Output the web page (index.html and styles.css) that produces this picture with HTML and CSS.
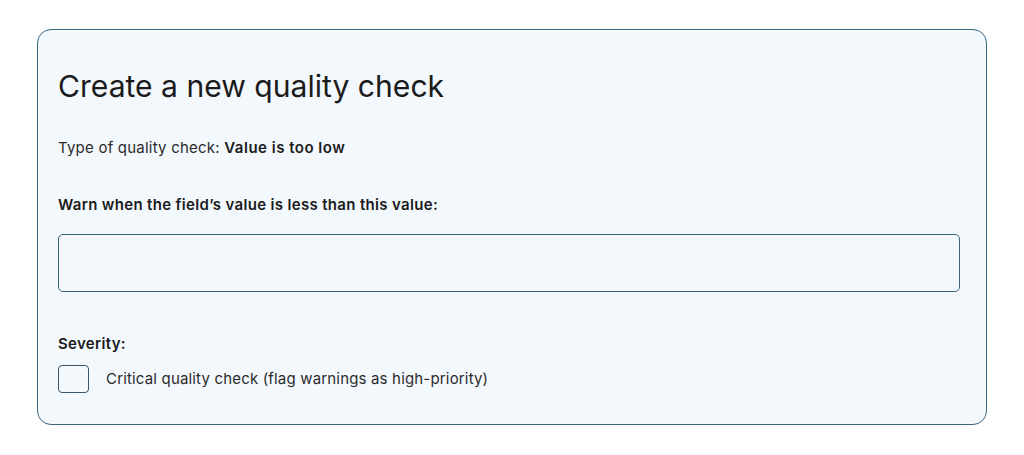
FILE: index.html
```html
<!DOCTYPE html>
<html lang="en">
<head>
<meta charset="utf-8">
<title>Create a new quality check</title>
<link rel="stylesheet" href="styles.css">
</head>
<body>
  <div class="card">
    <h1 class="title">Create a new quality check</h1>
    <p class="type">Type of quality check: <strong>Value is too low</strong></p>
    <label class="field-label" for="threshold">Warn when the field’s value is less than this value:</label>
    <input class="text-input" id="threshold" type="text">
    <div class="severity-label">Severity:</div>
    <label class="check-row">
      <span class="checkbox"></span>
      <span class="check-text">Critical quality check (flag warnings as high-priority)</span>
    </label>
  </div>
</body>
</html>
```

FILE: styles.css
```css
* { box-sizing: border-box; }
html, body { margin: 0; padding: 0; background: #ffffff; }
body {
  font-family: "Inter", "Liberation Sans", sans-serif;
  color: #222;
  padding: 29px 37px 0 37px;
}
.card {
  width: 950px;
  height: 396px;
  border: 1.5px solid #3a6480;
  border-radius: 14px;
  background: #f3f8fd;
  padding: 0 27px 0 20px;
  display: flex;
  flex-direction: column;
  align-items: flex-start;
}
.title {
  margin: 38px 0 0 0;
  font-size: 30.1px;
  font-weight: 400;
  line-height: 36px;
  letter-spacing: 0;
  color: #1b1b1b;
}
.type {
  margin: 34px 0 0 0;
  font-size: 15px;
  line-height: 20px;
  letter-spacing: 0.22px;
  color: #2b2b2b;
}
.type strong { font-weight: 600; color: #1b1b1b; letter-spacing: 0.5px; }
.field-label {
  margin-top: 37px;
  font-size: 15px;
  line-height: 20px;
  font-weight: 600;
  letter-spacing: 0.33px;
  color: #1b1b1b;
}
.text-input {
  margin-top: 19px;
  width: 902px;
  height: 58px;
  border: 1.5px solid #3a6480;
  border-radius: 5px;
  background: transparent;
  outline: none;
}
.severity-label {
  margin-top: 42px;
  font-size: 15px;
  line-height: 20px;
  font-weight: 600;
  letter-spacing: 0.33px;
  color: #1b1b1b;
}
.check-row {
  margin-top: 11px;
  display: flex;
  align-items: center;
  gap: 17px;
}
.checkbox {
  width: 31px;
  height: 28px;
  border: 1.5px solid #3b5468;
  border-radius: 4px;
}
.check-text {
  font-size: 15px;
  line-height: 20px;
  letter-spacing: 0.17px;
  color: #2b2b2b;
}
```
